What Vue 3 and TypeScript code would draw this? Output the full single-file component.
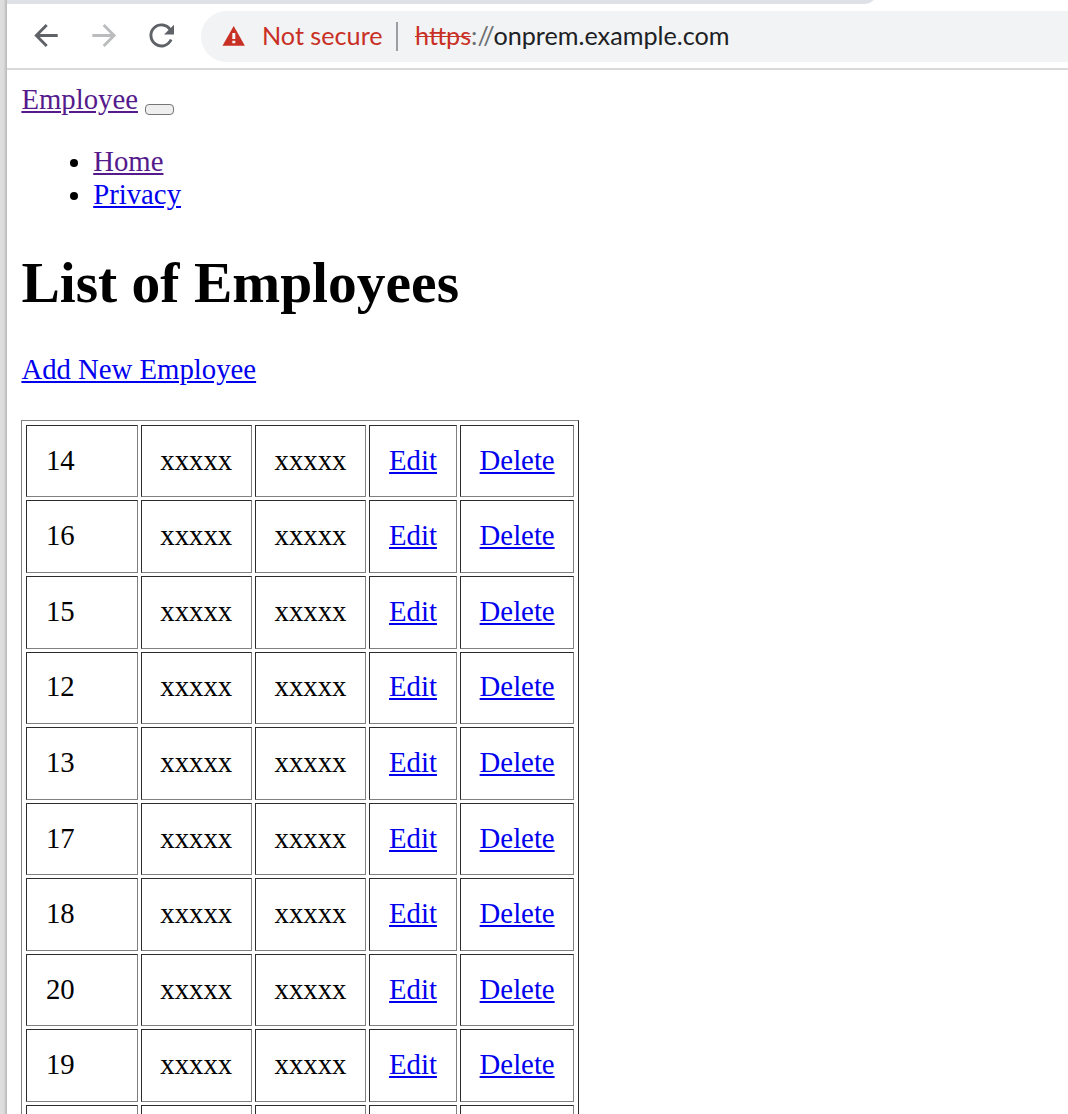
<script setup lang="ts">
interface Employee {
  id: number
  first: string
  last: string
}

const ids: number[] = [14, 16, 15, 12, 13, 17, 18, 20, 19]
const employees: Employee[] = ids.map((id) => ({ id, first: 'xxxxx', last: 'xxxxx' }))
</script>

<template>
  <div class="screen">
    <div class="edge"></div>
    <div class="window">
      <div class="tabs"><div class="tabstrip"></div></div>
      <header class="toolbar">
        <svg class="nav" width="180" height="64" viewBox="0 0 180 64" fill="none">
          <g stroke="#5f6368" stroke-width="2.9">
            <path d="M50.700 31.500H29.600M39.700 20.900L29.300 31.500L39.700 42" />
            <path stroke="#babcbe" d="M85.300 31.500H106.500M96.700 20.900L107.100 31.500L96.700 42" />
            <path d="M163.400 26A10.500 10.500 0 1 0 164.100 35.500" stroke-width="2.900" />
          </g>
          <path fill="#5f6368" d="M167 20.800V30.500H157z" />
        </svg>
        <div class="omnibox">
          <svg class="warning" width="24" height="22" viewBox="0 0 24 22">
            <path fill="#c93025" d="M11.700 1L22.900 20.700H.5z" />
            <path fill="#f1f3f4" d="M10.300 8h3v6h-3zM10.300 15.700h3v2.600h-3z" />
          </svg>
          <span class="status">Not secure</span>
          <span class="divider"></span>
          <span class="url"><span class="scheme">https</span><span class="slashes">://</span>onprem.example.com</span>
        </div>
      </header>
      <main class="page">
        <nav>
          <div class="brand"><a class="visited" href="#">Employee</a> <button type="button"></button></div>
          <ul>
            <li><a class="visited" href="#">Home</a></li>
            <li><a href="#">Privacy</a></li>
          </ul>
        </nav>
        <h1>List of Employees</h1>
        <p><a href="#">Add New Employee</a></p>
        <table>
          <tbody>
            <tr v-for="e in employees" :key="e.id">
              <td class="id">{{ e.id }}</td>
              <td>{{ e.first }}</td>
              <td>{{ e.last }}</td>
              <td class="action"><a href="#">Edit</a></td>
              <td class="action"><a href="#">Delete</a></td>
            </tr>
            <tr>
              <td v-for="n in 5" :key="n"></td>
            </tr>
          </tbody>
        </table>
      </main>
    </div>
  </div>
</template>

<style>
body {
  margin: 0;
  overflow: hidden;
}
</style>

<style scoped>
.screen {
  display: flex;
  height: 1114px;
  overflow: hidden;
  background: #fff;
}
.edge {
  flex: 0 0 7px;
  background: linear-gradient(90deg, #dfdfdf 0, #dcdcdc 4px, #c9c9c9 5px, #bcbcbc 7px);
}
.window {
  flex: 1;
  min-width: 0;
}
.tabs {
  height: 4px;
  overflow: hidden;
  display: flex;
  align-items: flex-end;
}
.tabstrip {
  width: 871px;
  height: 20px;
  flex: none;
  background: #dee1e6;
  border-bottom-right-radius: 14px;
}
.toolbar {
  height: 64px;
  display: flex;
  align-items: flex-start;
  border-bottom: 2px solid #dadada;
}
.nav {
  flex: none;
  width: 180px;
  margin-right: 14px;
}
.omnibox {
  flex: 1;
  height: 51px;
  margin-top: 7px;
  border-radius: 25.5px 0 0 25.5px;
  background: #f1f3f4;
  display: flex;
  align-items: center;
  font-family: Lato, sans-serif;
  font-size: 25.2px;
  line-height: 30px;
  color: #202124;
  white-space: pre;
}
.warning {
  margin: 0 0 2px 21px;
}
.status {
  width: 121px;
  margin-left: 16px;
  padding-bottom: 3px;
  color: #c93025;
}
.url {
  padding-bottom: 3px;
}
.divider {
  width: 2px;
  height: 29px;
  margin: 0 17px 0 13px;
  background: #9c9ea1;
}
.scheme {
  color: #c93025;
  text-decoration: line-through;
  text-decoration-thickness: 1px;
}
.slashes {
  color: #6b6e72;
}
.page {
  padding: 13.4px 14.4px 0;
  font-family: "Liberation Serif", serif;
  font-size: 28.75px;
  line-height: 33.15px;
  color: #000;
}
a {
  color: #0000ee;
}
a.visited {
  color: #551a8b;
}
.brand {
  height: 33px;
}
button {
  box-sizing: border-box;
  width: 29px;
  height: 11px;
  padding: 0;
  border: 1px solid #767676;
  border-radius: 4px;
  background: #efefef;
  vertical-align: -5px;
}
ul {
  margin: 28.8px 0;
  padding-left: 71.8px;
}
li::marker {
  font-size: 27px;
}
h1 {
  margin: 38.6px 0 36.9px;
  font-size: 57.5px;
  line-height: 66px;
}
p {
  margin: 0 0 33.95px;
}
table {
  display: block;
  box-sizing: border-box;
  width: 557.6px;
  padding: 3.8px 3.6px 3.6px;
  border: 1px solid;
  border-color: #808080 #2c2c2c #2c2c2c #808080;
}
tbody {
  display: grid;
  row-gap: 3px;
}
tr {
  display: grid;
  grid-template-columns: 111.6px 110.8px 110.8px 87.2px 114.1px;
  column-gap: 3.4px;
}
td {
  box-sizing: border-box;
  height: 72.55px;
  padding: 17.95px 18.4px;
  border: 1px solid;
  border-color: #2c2c2c #808080 #808080 #2c2c2c;
}
.id {
  padding-left: 19px;
}
.action {
  padding-left: 18.7px;
  padding-right: 18px;
}
</style>
